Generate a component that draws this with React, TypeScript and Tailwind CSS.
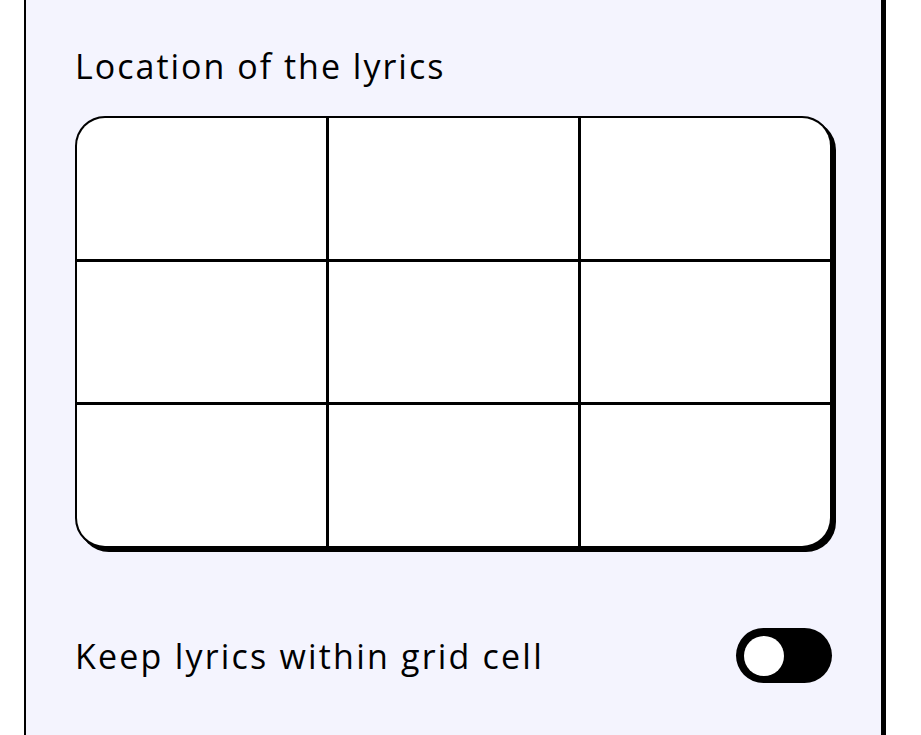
import React, { useState } from "react";

export default function App() {
  const [on, setOn] = useState(false);
  const cells = Array.from({ length: 9 });
  return (
    <div className="h-[735px] w-[921px] bg-white overflow-hidden" style={{ fontFamily: '"Open Sans", "DejaVu Sans", sans-serif' }}>
      <div className="ml-[24px] w-[859px] h-[800px] -mt-[20px] border-2 border-black bg-[#f4f4fe] shadow-[3px_0_0_#000] pl-[49px] pr-[49px] pt-[64px]">
        <h2 className="text-[34px] leading-[40px] text-black font-normal tracking-[2px]">Location of the lyrics</h2>
        <div className="mt-[30px] w-[757px] h-[432px] border-2 border-black rounded-[30px] shadow-[4px_4px_0_#000] overflow-hidden bg-black grid grid-cols-3 grid-rows-3 gap-[3px]">
          {cells.map((_, i) => (
            <button key={i} className="bg-white" aria-label={`cell ${i + 1}`} />
          ))}
        </div>
        <div className="mt-[80px] flex items-center justify-between w-[757px]">
          <span className="text-[34px] leading-[40px] text-black tracking-[2.2px]">Keep lyrics within grid cell</span>
          <button
            onClick={() => setOn(!on)}
            className="w-[96px] h-[55px] rounded-full bg-black flex items-center px-[8px]"
            aria-label="toggle"
          >
            <span className={`block w-[40px] h-[40px] rounded-full bg-white ${on ? "ml-auto" : ""}`} />
          </button>
        </div>
      </div>
    </div>
  );
}
